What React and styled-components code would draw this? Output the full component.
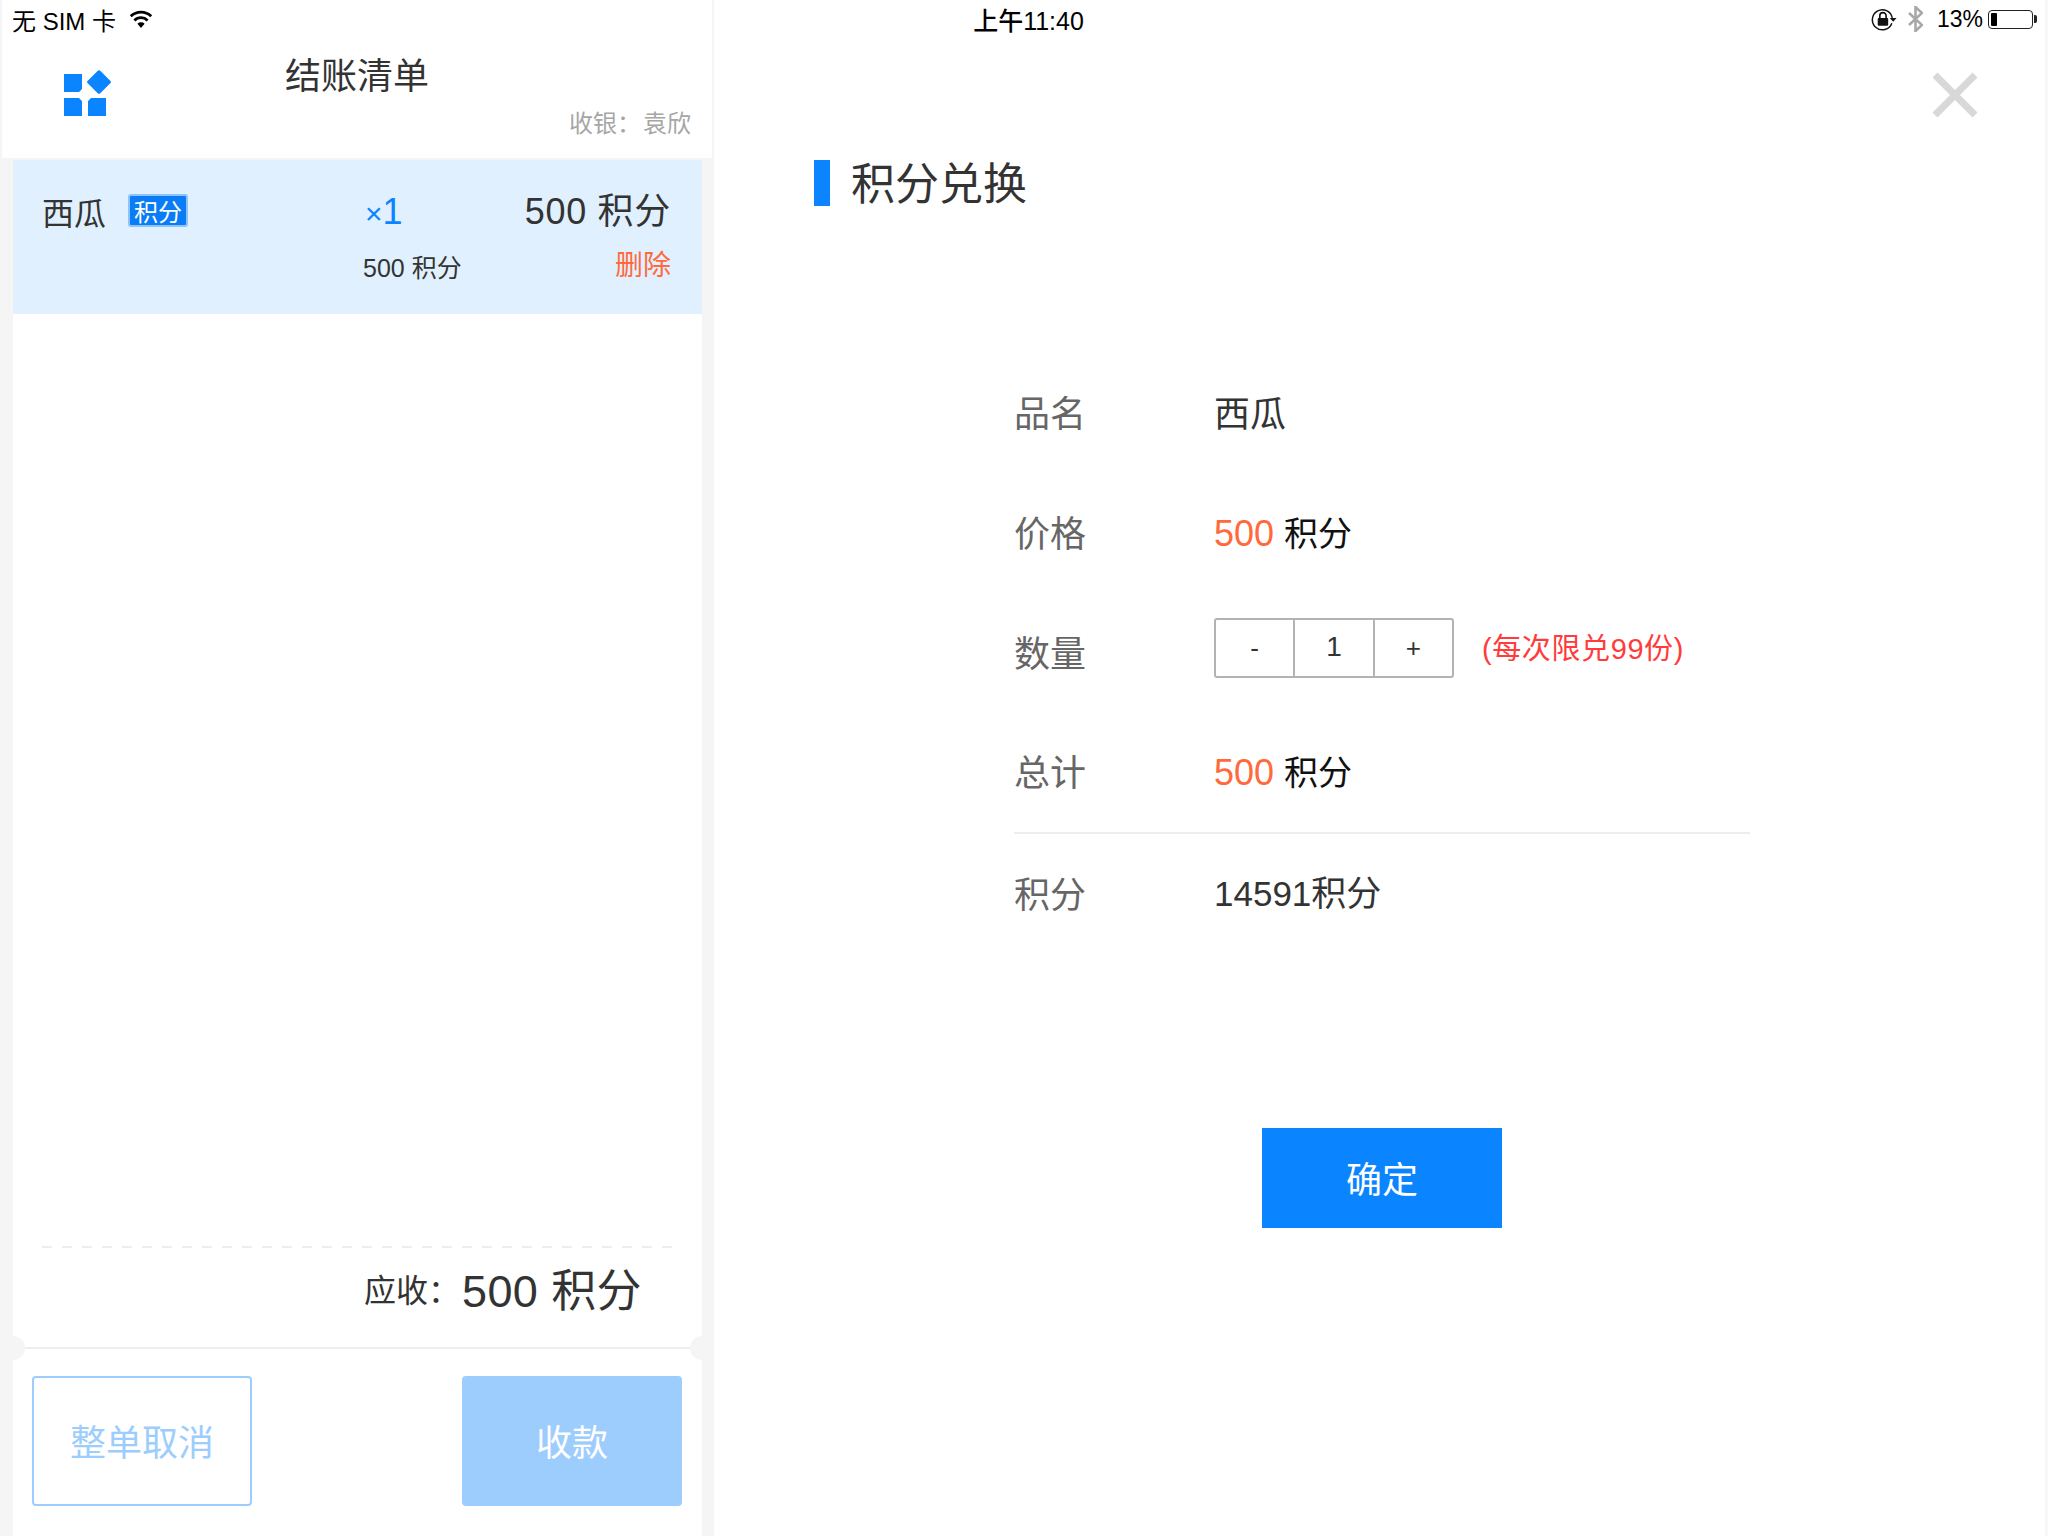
import React from 'react';
import styled, { createGlobalStyle } from 'styled-components';

const GlobalStyle = createGlobalStyle`
  html, body { margin: 0; padding: 0; background: #fff; }
  body {
    font-family: "Liberation Sans", "Noto Sans CJK SC", sans-serif;
    color: #333;
  }
  * { box-sizing: border-box; }
`;

const Screen = styled.div`
  position: relative;
  display: flex;
  width: 2048px;
  height: 1536px;
  overflow: hidden;
  background: #fff;
`;

// status bar sits over both panels
const StatusBar = styled.div`
  position: absolute;
  top: 0;
  left: 0;
  right: 0;
  z-index: 2;
  height: 38px;
  padding: 0 11px 0 12px;
  display: grid;
  grid-template-columns: 1fr auto 1fr;
  align-items: center;
  font-size: 24px;
  color: #000;
`;

const StatusLeft = styled.div`
  display: flex;
  align-items: center;
  gap: 13px;
`;

const StatusTime = styled.div`
  font-size: 25px;
  font-weight: 500;
  margin-left: 8px;
`;

const StatusRight = styled.div`
  display: flex;
  align-items: center;
  justify-content: flex-end;
  font-size: 23px;
`;

const Percent = styled.span`
  margin: 0 5px 0 14px;
`;

const Battery = styled.div`
  position: relative;
  width: 45px;
  height: 19px;
  margin-right: 4px;
  padding: 2px;
  border: 1px solid #222;
  border-radius: 4px;
  &::before {
    content: '';
    display: block;
    width: 6px;
    height: 100%;
    background: #000;
    border-radius: 1px;
  }
  &::after {
    content: '';
    position: absolute;
    top: 4px;
    right: -5px;
    width: 3px;
    height: 8px;
    background: #222;
    border-radius: 0 2px 2px 0;
  }
`;

const BluetoothSvg = styled.svg`
  margin-left: 11px;
`;

const LeftPanel = styled.aside`
  width: 714px;
  height: 100%;
  flex: none;
  display: flex;
  flex-direction: column;
  background: #f5f5f5;
`;

const Header = styled.header`
  height: 158px;
  margin: 0 2px;
  padding: 56px 24px 20px;
  display: grid;
  grid-template-columns: 1fr auto 1fr;
  background: #fff;
`;

const Logo = styled.svg`
  display: block;
  margin: 14px 0 0 38px;
`;

const HeaderTitle = styled.div`
  font-size: 36px;
  line-height: 42px;
  color: #333;
`;

const Cashier = styled.div`
  align-self: end;
  margin-right: -3px;
  text-align: right;
  font-size: 24px;
  line-height: 28px;
  color: #a6a6a6;
`;

const CashierName = styled.span`
  margin-left: 2px;
`;

const Sheet = styled.div`
  flex: 1;
  margin: 2px 12px 0 13px;
  display: flex;
  flex-direction: column;
  background: #fff;
`;

const OrderItem = styled.div`
  height: 154px;
  padding: 31px 31px 0 29px;
  display: grid;
  grid-template-columns: 323px 1fr auto;
  grid-template-rows: 42px 40px;
  row-gap: 13px;
  align-items: center;
  background: #e0f0ff;
`;

const ItemName = styled.div`
  display: flex;
  align-items: center;
  gap: 22px;
  margin-top: -3px;
  font-size: 32px;
`;

const PointsTag = styled.span`
  width: 60px;
  height: 33px;
  display: flex;
  align-items: center;
  justify-content: center;
  font-size: 24px;
  color: #fff;
  background: #0a7cf5;
  border: 2px solid #8fc4fa;
  border-radius: 3px;
`;

const ItemQty = styled.div`
  font-size: 36px;
  color: #0a84ff;
`;

const QtySign = styled.span`
  font-size: 30px;
`;

const ItemPrice = styled.div`
  margin-top: -8px;
  font-size: 36px;
  letter-spacing: 0.7px;
  text-align: right;
`;

const UnitPrice = styled.div`
  grid-column: 2;
  margin: -1px 0 0 -2px;
  font-size: 25px;
`;

const DeleteLink = styled.div`
  margin-top: -7px;
  text-align: right;
  font-size: 28px;
  color: #ff6a3c;
`;

const Spacer = styled.div`
  flex: 1;
`;

const DashedLine = styled.div`
  margin: 0 25px 0 29px;
  height: 2px;
  background: repeating-linear-gradient(90deg, #eee 0 10px, transparent 10px 20px);
`;

const DueRow = styled.div`
  height: 99px;
  padding: 0 60px 20px 0;
  display: flex;
  align-items: center;
  justify-content: flex-end;
  gap: 2px;
  font-size: 32px;
`;

const DueAmount = styled.span`
  font-size: 45px;
  letter-spacing: 0.4px;
`;

const Footer = styled.div`
  position: relative;
  height: 189px;
  padding: 27px 20px 0 19px;
  display: flex;
  justify-content: space-between;
  align-items: flex-start;
  border-top: 2px solid #eee;
`;

const Notch = styled.span`
  position: absolute;
  top: -13px;
  ${p => (p.$side === 'left' ? 'left: -12px;' : 'right: -12px;')}
  width: 24px;
  height: 24px;
  border-radius: 50%;
  background: #f5f5f5;
`;

const FooterButton = styled.div`
  width: 220px;
  height: 130px;
  padding-bottom: 3px;
  display: flex;
  align-items: center;
  justify-content: center;
  font-size: 36px;
  border-radius: 4px;
  border: 2px solid #9dcdfd;
  color: ${p => (p.$filled ? '#fff' : '#9dcdfd')};
  background: ${p => (p.$filled ? '#9dcdfd' : '#fff')};
`;

const RightPanel = styled.main`
  flex: 1;
  position: relative;
  padding: 160px 0 0 100px;
  border-right: 3px solid #f8f8f8;
`;

const CloseIcon = styled.svg`
  position: absolute;
  top: 72px;
  right: 67px;
`;

const PageTitle = styled.h1`
  margin: 0;
  height: 46px;
  padding-left: 21px;
  font-size: 44px;
  font-weight: 400;
  line-height: 50px;
  color: #333;
  border-left: 16px solid #0a84ff;
`;

const Form = styled.div`
  width: 736px;
  margin: 145px 0 0 200px;
`;

const FormRow = styled.div`
  height: ${p => p.$height || 120}px;
  display: flex;
  align-items: center;
  font-size: 36px;
  color: #333;
  ${p => p.$ruled && 'padding-bottom: 3px; border-bottom: 2px solid #eee;'}
`;

const FormLabel = styled.div`
  width: 200px;
  flex: none;
  color: #666;
`;

const Price = styled.span`
  margin-top: 5px;
  color: #ff6a3c;
`;

const Unit = styled.span`
  margin-left: 10px;
  font-size: 34px;
  color: #111;
`;

const Balance = styled.span`
  margin-top: -2px;
  font-size: 35px;
`;

const Stepper = styled.div`
  width: 240px;
  height: 60px;
  margin-top: -6px;
  display: flex;
  border: 2px solid #b3b3b3;
  border-radius: 3px;
`;

const StepCell = styled.div`
  flex: 1;
  display: flex;
  align-items: center;
  justify-content: center;
  font-size: ${p => (p.$value ? 28 : 26)}px;
  padding-bottom: ${p => (p.$value ? 2 : 0)}px;
  color: #333;
  & + & { border-left: 2px solid #b3b3b3; }
`;

const LimitNote = styled.div`
  margin: -10px 0 0 28px;
  font-size: 29px;
  letter-spacing: 0.6px;
  color: #ff3b3b;
`;

const ConfirmButton = styled.div`
  width: 240px;
  height: 100px;
  margin: 179px 0 0 248px;
  padding-bottom: 2px;
  display: flex;
  align-items: center;
  justify-content: center;
  font-size: 36px;
  color: #fff;
  background: #0a84ff;
`;

const WifiIcon = () => (
  <svg width="24" height="18" viewBox="0 0 24 18">
    <path d="M12 18l-3.6-4.2a5.2 5.2 0 0 1 7.200 0z" fill="#000" />
    <path d="M5.400 10.400a9.400 9.400 0 0 1 13.200 0" fill="none" stroke="#000" strokeWidth="2.8" />
    <path d="M1.800 6.200a14.600 14.600 0 0 1 20.400 0" fill="none" stroke="#000" strokeWidth="2.8" />
  </svg>
);

const RotationLockIcon = () => (
  <svg width="26" height="23" viewBox="0 0 24 22">
    <path d="M19.500 14.500a9.600 9.600 0 1 1 .4-5" fill="none" stroke="#111" strokeWidth="1.4" />
    <path d="M17.500 9.500h6.500l-3.200 3.600z" fill="#111" />
    <rect x="6" y="9.500" width="10" height="7.500" rx="1" fill="#111" />
    <path d="M8 9.500V7.400a3 3 0 0 1 6 0v2.100" fill="none" stroke="#111" strokeWidth="1.6" />
  </svg>
);

const BluetoothIcon = () => (
  <BluetoothSvg width="15" height="26" viewBox="0 0 15 26">
    <path d="M1 7l13 12-6.500 6V1L14 7 1 19" fill="none" stroke="#a8a8a8" strokeWidth="2.6" />
  </BluetoothSvg>
);

export default function App() {
  return (
    <Screen>
      <GlobalStyle />
      <StatusBar>
        <StatusLeft>
          <span>无 SIM 卡</span>
          <WifiIcon />
        </StatusLeft>
        <StatusTime>上午11:40</StatusTime>
        <StatusRight>
          <RotationLockIcon />
          <BluetoothIcon />
          <Percent>13%</Percent>
          <Battery />
        </StatusRight>
      </StatusBar>

      <LeftPanel>
        <Header>
          <Logo width="48" height="46" viewBox="0 0 48 46">
            <path d="M0 4h18v15l-3 3H0zM0 28h15l3 3v15H0zM27 28h15v18H24V31z" fill="#0a84ff" />
            <path d="M33.500 1a2 2 0 0 1 3 0l10 10a1.500 1.500 0 0 1 0 2l-10 10a2 2 0 0 1-3 0l-10-10a1.500 1.500 0 0 1 0-2z" fill="#0a84ff" />
          </Logo>
          <HeaderTitle>结账清单</HeaderTitle>
          <Cashier>收银：<CashierName>袁欣</CashierName></Cashier>
        </Header>

        <Sheet>
          <OrderItem>
            <ItemName>
              西瓜
              <PointsTag>积分</PointsTag>
            </ItemName>
            <ItemQty><QtySign>×</QtySign>1</ItemQty>
            <ItemPrice>500 积分</ItemPrice>
            <UnitPrice>500 积分</UnitPrice>
            <DeleteLink>删除</DeleteLink>
          </OrderItem>
          <Spacer />
          <DashedLine />
          <DueRow>
            <span>应收：</span>
            <DueAmount>500 积分</DueAmount>
          </DueRow>
          <Footer>
            <Notch $side="left" />
            <Notch $side="right" />
            <FooterButton>整单取消</FooterButton>
            <FooterButton $filled>收款</FooterButton>
          </Footer>
        </Sheet>
      </LeftPanel>

      <RightPanel>
        <CloseIcon width="46" height="46" viewBox="0 0 46 46">
          <path d="M3 3l40 40M43 3L3 43" stroke="#d8d8d8" strokeWidth="7" fill="none" />
        </CloseIcon>
        <PageTitle>积分兑换</PageTitle>
        <Form>
          <FormRow>
            <FormLabel>品名</FormLabel>
            <span>西瓜</span>
          </FormRow>
          <FormRow>
            <FormLabel>价格</FormLabel>
            <Price>500</Price>
            <Unit>积分</Unit>
          </FormRow>
          <FormRow>
            <FormLabel>数量</FormLabel>
            <Stepper>
              <StepCell>-</StepCell>
              <StepCell $value>1</StepCell>
              <StepCell>+</StepCell>
            </Stepper>
            <LimitNote>(每次限兑99份)</LimitNote>
          </FormRow>
          <FormRow $ruled $height={123}>
            <FormLabel>总计</FormLabel>
            <Price>500</Price>
            <Unit>积分</Unit>
          </FormRow>
          <FormRow $height={115}>
            <FormLabel>积分</FormLabel>
            <Balance>14591积分</Balance>
          </FormRow>
          <ConfirmButton>确定</ConfirmButton>
        </Form>
      </RightPanel>
    </Screen>
  );
}
